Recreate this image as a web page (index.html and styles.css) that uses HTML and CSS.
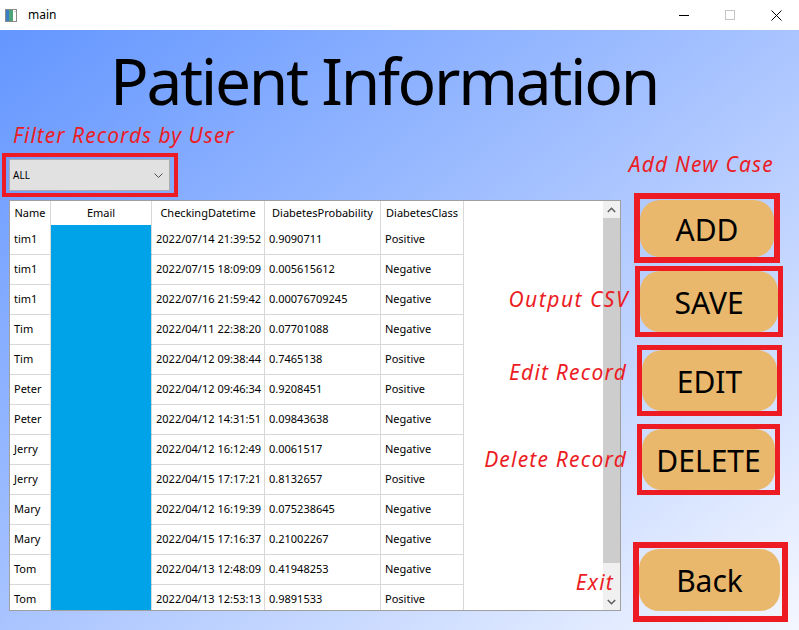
FILE: index.html
```html
<!DOCTYPE html>
<html>
<head>
<meta charset="utf-8">
<title>main</title>
<link rel="stylesheet" href="styles.css">
</head>
<body>
<div class="window">
  <div class="titlebar">
    <svg class="app-icon" width="12" height="13" viewBox="0 0 12 13">
      <rect x="0.5" y="0.5" width="11" height="12" fill="#fff" stroke="#8a8a8a"/>
      <rect x="1" y="1" width="7" height="11" fill="#3a7fc4"/>
      <rect x="4" y="1" width="4" height="11" fill="#4fa37a"/>
      <rect x="9" y="2" width="2" height="1" fill="#c8c8c8"/>
    </svg>
    <span class="app-title">main</span>
    <div class="controls">
      <div class="ctrl"><svg width="10" height="10" viewBox="0 0 10 10"><line x1="0" y1="5.5" x2="10" y2="5.5" stroke="#000" stroke-width="1"/></svg></div>
      <div class="ctrl"><svg width="10" height="10" viewBox="0 0 10 10"><rect x="0.5" y="0.5" width="9" height="9" fill="none" stroke="#c4c4c4" stroke-width="1"/></svg></div>
      <div class="ctrl"><svg width="11" height="11" viewBox="0 0 11 11"><path d="M0.5 0.5 L10.5 10.5 M10.5 0.5 L0.5 10.5" stroke="#000" stroke-width="1"/></svg></div>
    </div>
  </div>
  <div class="client">
    <h1 class="title">Patient Information</h1>
    <div class="filter-note">Filter Records by User</div>
    <div class="workspace">
      <div class="left">
        <div class="mark combo-mark">
          <div class="combo">
            <span>ALL</span>
            <svg width="9" height="5" viewBox="0 0 9 5"><path d="M0.5 0.5 L4.5 4.5 L8.5 0.5" fill="none" stroke="#505050" stroke-width="1"/></svg>
          </div>
        </div>
        <div class="table-frame">
          <div class="viewport">
            <div class="row head">
              <div class="cell">Name</div>
              <div class="cell">Email</div>
              <div class="cell">CheckingDatetime</div>
              <div class="cell">DiabetesProbability</div>
              <div class="cell">DiabetesClass</div>
            </div>
            <div class="row"><div class="cell">tim1</div><div class="cell email"></div><div class="cell">2022/07/14 21:39:52</div><div class="cell">0.9090711</div><div class="cell">Positive</div></div>
            <div class="row"><div class="cell">tim1</div><div class="cell email"></div><div class="cell">2022/07/15 18:09:09</div><div class="cell">0.005615612</div><div class="cell">Negative</div></div>
            <div class="row"><div class="cell">tim1</div><div class="cell email"></div><div class="cell">2022/07/16 21:59:42</div><div class="cell">0.00076709245</div><div class="cell">Negative</div></div>
            <div class="row"><div class="cell">Tim</div><div class="cell email"></div><div class="cell">2022/04/11 22:38:20</div><div class="cell">0.07701088</div><div class="cell">Negative</div></div>
            <div class="row"><div class="cell">Tim</div><div class="cell email"></div><div class="cell">2022/04/12 09:38:44</div><div class="cell">0.7465138</div><div class="cell">Positive</div></div>
            <div class="row"><div class="cell">Peter</div><div class="cell email"></div><div class="cell">2022/04/12 09:46:34</div><div class="cell">0.9208451</div><div class="cell">Positive</div></div>
            <div class="row"><div class="cell">Peter</div><div class="cell email"></div><div class="cell">2022/04/12 14:31:51</div><div class="cell">0.09843638</div><div class="cell">Negative</div></div>
            <div class="row"><div class="cell">Jerry</div><div class="cell email"></div><div class="cell">2022/04/12 16:12:49</div><div class="cell">0.0061517</div><div class="cell">Negative</div></div>
            <div class="row"><div class="cell">Jerry</div><div class="cell email"></div><div class="cell">2022/04/15 17:17:21</div><div class="cell">0.8132657</div><div class="cell">Positive</div></div>
            <div class="row"><div class="cell">Mary</div><div class="cell email"></div><div class="cell">2022/04/12 16:19:39</div><div class="cell">0.075238645</div><div class="cell">Negative</div></div>
            <div class="row"><div class="cell">Mary</div><div class="cell email"></div><div class="cell">2022/04/15 17:16:37</div><div class="cell">0.21002267</div><div class="cell">Negative</div></div>
            <div class="row"><div class="cell">Tom</div><div class="cell email"></div><div class="cell">2022/04/13 12:48:09</div><div class="cell">0.41948253</div><div class="cell">Negative</div></div>
            <div class="row"><div class="cell">Tom</div><div class="cell email"></div><div class="cell">2022/04/13 12:53:13</div><div class="cell">0.9891533</div><div class="cell">Positive</div></div>
          </div>
          <div class="scrollbar">
            <div class="sb-arrow"><svg width="9" height="6" viewBox="0 0 9 6"><path d="M0.8 5 L4.5 1.3 L8.2 5" fill="none" stroke="#606060" stroke-width="1.6"/></svg></div>
            <div class="sb-track"><div class="sb-thumb"></div></div>
            <div class="sb-arrow"><svg width="9" height="6" viewBox="0 0 9 6"><path d="M0.8 1 L4.5 4.7 L8.2 1" fill="none" stroke="#606060" stroke-width="1.6"/></svg></div>
          </div>
        </div>
      </div>
      <div class="right">
        <div class="mark action act-add">
          <span class="note note-add">Add New Case</span>
          <div class="btn">ADD</div>
        </div>
        <div class="mark action act-save">
          <span class="note note-save">Output CSV</span>
          <div class="btn">SAVE</div>
        </div>
        <div class="mark action act-edit">
          <span class="note note-edit">Edit Record</span>
          <div class="btn">EDIT</div>
        </div>
        <div class="mark action act-delete">
          <span class="note note-delete">Delete Record</span>
          <div class="btn">DELETE</div>
        </div>
        <div class="mark action act-back">
          <span class="note note-back">Exit</span>
          <div class="btn">Back</div>
        </div>
      </div>
    </div>
  </div>
</div>
</body>
</html>
```

FILE: styles.css
```css
* { box-sizing: border-box; }
html, body { margin: 0; padding: 0; }
body {
  width: 799px;
  height: 630px;
  overflow: hidden;
  font-family: "Noto Sans", "Open Sans", sans-serif;
  color: #000;
}
.window {
  width: 799px;
  height: 630px;
  display: flex;
  flex-direction: column;
}
.titlebar {
  height: 30px;
  flex: none;
  background: #fff;
  display: flex;
  align-items: center;
}
.app-icon { margin-left: 5px; }
.app-title {
  margin-left: 11px;
  font-size: 12px;
  line-height: 16px;
}
.controls { margin-left: auto; display: flex; }
.ctrl {
  width: 46px;
  height: 30px;
  display: flex;
  align-items: center;
  justify-content: center;
}
.client {
  flex: 1;
  display: flex;
  flex-direction: column;
  background: linear-gradient(to bottom right, #6396ff 0%, #a9c4ff 50%, #f4f7ff 100%);
}
.title {
  margin: 0;
  padding: 19px 0 0 110px;
  font-weight: 400;
  font-size: 64px;
  line-height: 64px;
  letter-spacing: -2.3px;
  white-space: nowrap;
}
.filter-note {
  margin-top: 10px;
  padding-left: 13px;
  font-style: italic;
  font-size: 21px;
  line-height: 24px;
  letter-spacing: 1px;
  color: #ec1c24;
}
.workspace {
  display: flex;
  align-items: flex-start;
}
.left {
  width: 619px;
  margin-left: 2px;
  padding-top: 6px;
}
.mark { border: 4px solid #ed1c24; }
.combo-mark {
  width: 176px;
  height: 44px;
  padding: 2px 4px 2px 3px;
}
.combo {
  height: 32px;
  background: #e1e1e1;
  border: 1px solid #adadad;
  display: flex;
  align-items: center;
  justify-content: space-between;
  padding: 0 6px 0 3px;
  font-size: 10px;
}
.table-frame {
  margin: 3px 0 0 7px;
  width: 612px;
  height: 411px;
  border: 1px solid #a0a0a0;
  display: flex;
  background: #fff;
}
.viewport {
  flex: 1;
  overflow: hidden;
}
.row {
  display: grid;
  grid-template-columns: 41px 101px 113px 116px 83px;
  height: 30px;
}
.cell {
  border-right: 1px solid #d8d8d8;
  border-bottom: 1px solid #d8d8d8;
  display: flex;
  align-items: center;
  padding: 0 0 2px 4px;
  font-size: 11px;
  white-space: nowrap;
  overflow: hidden;
}
.row.head { height: 24px; }
.row.head .cell {
  border-bottom: none;
  justify-content: center;
  padding: 0 0 2px 0;
}
.cell.email {
  background: #00a2e8;
  border-bottom-color: #00a2e8;
}
.scrollbar {
  width: 17px;
  display: flex;
  flex-direction: column;
  background: #f0f0f0;
}
.sb-arrow {
  height: 17px;
  display: flex;
  align-items: center;
  justify-content: center;
}
.sb-track { flex: 1; padding-bottom: 30px; }
.sb-thumb { height: 100%; background: #cdcdcd; }
.right {
  margin-left: 12px;
  padding-top: 46px;
  display: flex;
  flex-direction: column;
}
.action { position: relative; }
.btn {
  height: 100%;
  background: #e9b86d;
  border-radius: 20px;
  display: flex;
  align-items: center;
  justify-content: center;
  font-size: 30px;
  line-height: 1;
  padding-top: 2px;
}
.act-add { width: 146px; height: 70px; border-width: 6px; margin-left: 1px; padding-top: 1px; }
.act-save { width: 148px; height: 71px; border-width: 5px; margin: 3px 0 0 2px; }
.act-edit { width: 145px; height: 71px; border-width: 5px; margin: 8px 0 0 4px; }
.act-delete { width: 143px; height: 71px; border-width: 5px; margin: 8px 0 0 4px; }
.act-back { width: 155px; height: 80px; border-width: 6px; margin-top: 47px; padding: 1px 2px 5px 0; }
.note {
  position: absolute;
  font-style: italic;
  font-size: 21px;
  line-height: 24px;
  letter-spacing: 1.2px;
  color: #ec1c24;
  white-space: nowrap;
}
.note-add { right: 0; top: -47px; }
.note-save { right: calc(100% + 11px); top: 16px; letter-spacing: 1.5px; }
.note-edit { right: calc(100% + 15px); top: 10px; }
.note-delete { right: calc(100% + 15px); top: 18px; }
.note-back { right: calc(100% + 25px); top: 22px; }
```
